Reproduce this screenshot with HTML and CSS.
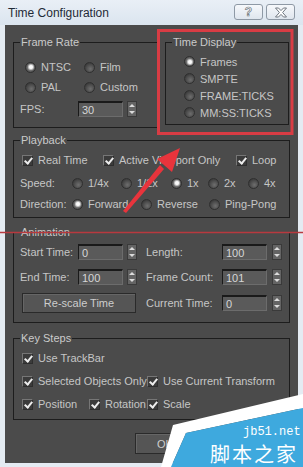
FILE: index.html
```html
<!DOCTYPE html>
<html lang="en">
<head>
    <meta charset="UTF-8">
    <meta name="viewport" content="width=device-width, initial-scale=1.0">
    <title>Time Configuration</title>
    <link rel="stylesheet" href="styles.css">
</head>
<body>
    <div class="window">
        <div class="titlebar">
            <span class="title">Time Configuration</span>
            <div class="caption-btns">
                <span class="cbtn cbtn-help">?</span>
                <span class="cbtn">
                    <svg width="14" height="11" viewBox="0 0 14 11"><path d="M1.5 1h3l2.5 2.6L9.5 1h3L8.6 5.5l3.9 4.5h-3L7 7.4 4.5 10h-3l3.9-4.5z" fill="#fff" stroke="#6f7780" stroke-width="1"/></svg>
                </span>
            </div>
        </div>

        <div class="client">
            <div class="top-row">
                <fieldset class="group frame-rate">
                    <legend>Frame Rate</legend>
                    <div class="radio-grid">
                        <label class="opt"><i class="radio on"></i>NTSC</label>
                        <label class="opt"><i class="radio"></i>Film</label>
                        <label class="opt"><i class="radio"></i>PAL</label>
                        <label class="opt"><i class="radio"></i>Custom</label>
                    </div>
                    <div class="fps-row">
                        <span class="fps-label">FPS:</span>
                        <span class="input">30</span>
                        <span class="spin"><i class="up"></i><i class="down"></i></span>
                    </div>
                </fieldset>

                <fieldset class="group time-display">
                    <legend>Time Display</legend>
                    <label class="opt td-opt"><i class="radio on"></i>Frames</label>
                    <label class="opt td-opt"><i class="radio"></i>SMPTE</label>
                    <label class="opt td-opt"><i class="radio"></i>FRAME:TICKS</label>
                    <label class="opt td-opt"><i class="radio"></i>MM:SS:TICKS</label>
                </fieldset>
            </div>

            <fieldset class="group playback">
                <legend>Playback</legend>
                <div class="pb-row pb-checks">
                    <label class="opt w81"><i class="check"></i>Real Time</label>
                    <label class="opt w133"><i class="check"></i>Active Viewport Only</label>
                    <label class="opt"><i class="check"></i>Loop</label>
                </div>
                <div class="pb-row pb-speed">
                    <span class="row-label">Speed:</span>
                    <label class="opt w49"><i class="radio"></i>1/4x</label>
                    <label class="opt w50"><i class="radio"></i>1/2x</label>
                    <label class="opt w37"><i class="radio on"></i>1x</label>
                    <label class="opt w40"><i class="radio"></i>2x</label>
                    <label class="opt"><i class="radio"></i>4x</label>
                </div>
                <div class="pb-row pb-dir">
                    <span class="row-label">Direction:</span>
                    <label class="opt w69"><i class="radio on"></i>Forward</label>
                    <label class="opt w68"><i class="radio"></i>Reverse</label>
                    <label class="opt"><i class="radio"></i>Ping-Pong</label>
                </div>
            </fieldset>

            <fieldset class="group animation">
                <legend>Animation</legend>
                <div class="anim-row row-start">
                    <span class="lbl-a">Start Time:</span>
                    <span class="input">0</span>
                    <span class="spin"><i class="up"></i><i class="down"></i></span>
                    <span class="lbl-b">Length:</span>
                    <span class="input">100</span>
                    <span class="spin spin-b"><i class="up"></i><i class="down"></i></span>
                </div>
                <div class="anim-row row-end">
                    <span class="lbl-a">End Time:</span>
                    <span class="input">100</span>
                    <span class="spin"><i class="up"></i><i class="down"></i></span>
                    <span class="lbl-b">Frame Count:</span>
                    <span class="input">101</span>
                    <span class="spin spin-b"><i class="up"></i><i class="down"></i></span>
                </div>
                <div class="anim-row row-current">
                    <span class="btn btn-rescale">Re-scale Time</span>
                    <span class="lbl-b lbl-current">Current Time:</span>
                    <span class="input">0</span>
                    <span class="spin spin-b"><i class="up"></i><i class="down"></i></span>
                </div>
            </fieldset>

            <fieldset class="group key-steps">
                <legend>Key Steps</legend>
                <div class="ks-row ks-first">
                    <label class="opt"><i class="check"></i>Use TrackBar</label>
                </div>
                <div class="ks-row">
                    <label class="opt w125"><i class="check"></i>Selected Objects Only</label>
                    <label class="opt"><i class="check"></i>Use Current Transform</label>
                </div>
                <div class="ks-row">
                    <label class="opt w67"><i class="check"></i>Position</label>
                    <label class="opt w58"><i class="check"></i>Rotation</label>
                    <label class="opt"><i class="check"></i>Scale</label>
                </div>
            </fieldset>

            <div class="footer">
                <span class="btn btn-ok">OK</span>
            </div>
        </div>

        <!-- annotations drawn over the dialog -->
        <svg class="marks" width="303" height="467" viewBox="0 0 303 467">
            <rect x="158.5" y="30.5" width="133.5" height="103" fill="none" stroke="#d83c44" stroke-width="3"/>
            <line x1="0" y1="232.5" x2="303" y2="232.5" stroke="#b8393f" stroke-width="1.5"/>
            <polygon points="123,211 126,213 164,169 160,165" fill="#e8343c"/>
            <polygon points="180,148 157,159 172,172" fill="#e8343c"/>
            <polygon points="161,467 173,425 303,394 303,408 186,433 171,467" fill="#ffffff"/>
            <polygon points="171,467 186,433 303,408 303,467" fill="#3ea9de"/>
            <text class="wm-en" x="243" y="435">jb51.net</text>
            <text class="wm-cn" x="210" y="462">脚本之家</text>
        </svg>
    </div>
</body>
</html>
```

FILE: styles.css
```css
* {
    margin: 0;
    padding: 0;
}

body {
    background: #e6edf4;
}

.window {
    width: 303px;
    height: 467px;
    position: relative;
    overflow: hidden;
    background: #e4ebf2;
    font-family: "Liberation Sans", Arial, sans-serif;
    font-size: 11px;
    color: #c6c6c6;
}

/* title bar */
.titlebar {
    height: 25px;
    display: flex;
    padding: 0 8px 0 8px;
    background: linear-gradient(#e9eff6, #dbe5ef);
}

.title {
    padding-top: 6px;
    font-size: 12px;
    line-height: 15px;
    color: #1f2a36;
}

.caption-btns {
    margin-left: auto;
    margin-top: 4px;
    display: flex;
    gap: 3px;
}

.cbtn {
    width: 29px;
    height: 16px;
    box-sizing: border-box;
    display: flex;
    align-items: center;
    justify-content: center;
    border: 1px solid #8e99a5;
    border-radius: 3px;
    background: linear-gradient(#f6f8fb, #dfe6ee);
}

.cbtn-help {
    font-size: 12px;
    font-weight: bold;
    color: #fff;
    -webkit-text-stroke: 0.7px #6f7780;
}

/* dark client area */
.client {
    height: 438px;
    margin: 0 5px;
    padding: 11px 8px 0 8px;
    box-sizing: border-box;
    background: #4b4b4b;
}

.group {
    min-width: 0;
    padding: 0 6px;
    border: 1px solid #1d1d1d;
    box-sizing: border-box;
}

.group legend {
    padding: 0 1px;
    line-height: 13px;
    color: #cacaca;
}

.opt {
    display: flex;
    align-items: center;
    gap: 5px;
    white-space: nowrap;
}

.radio {
    width: 11px;
    height: 11px;
    flex: none;
    position: relative;
    box-sizing: border-box;
    border-radius: 50%;
    border: 1px solid #2f2f2f;
    background: radial-gradient(circle at 60% 65%, #6e6e6e, #3c3c3c 75%);
}

.radio.on {
    background: radial-gradient(circle at 50% 50%, #9a9a9a, #4a4a4a 80%);
}

.radio.on:after {
    content: '';
    position: absolute;
    left: 2.5px;
    top: 2.5px;
    width: 4px;
    height: 4px;
    border-radius: 50%;
    background: #fafafa;
    box-shadow: 0 0 1px 1px rgba(255,255,255,.6);
}

.check {
    width: 11px;
    height: 11px;
    flex: none;
    position: relative;
    box-sizing: border-box;
    border: 1px solid #767676;
    border-right-color: #2e2e2e;
    border-bottom-color: #2e2e2e;
    background: #3b3b3b;
}

.check:after {
    content: '';
    position: absolute;
    left: 3px;
    top: 0;
    width: 3px;
    height: 6px;
    border: solid #ececec;
    border-width: 0 2px 2px 0;
    transform: rotate(40deg);
}

.input {
    height: 16px;
    width: 45px;
    flex: none;
    box-sizing: border-box;
    padding-left: 3px;
    line-height: 14px;
    color: #d6d6d6;
    background: #5a5a5a;
    border: 1px solid #6c6c6c;
    border-top: 2px solid #1a1a1a;
    border-left: 1px solid #1a1a1a;
}

.spin {
    width: 10px;
    height: 16px;
    flex: none;
    margin-left: 4px;
    box-sizing: border-box;
    display: flex;
    flex-direction: column;
    justify-content: space-around;
    align-items: center;
    border: 1px solid #3a3a3a;
    background: #646464;
}

.spin i {
    width: 0;
    height: 0;
    border-left: 3px solid transparent;
    border-right: 3px solid transparent;
}

.spin .up {
    border-bottom: 3px solid #dcdcdc;
}

.spin .down {
    border-top: 3px solid #dcdcdc;
}

.btn {
    display: flex;
    align-items: center;
    justify-content: center;
    box-sizing: border-box;
    color: #cdcdcd;
    background: #555;
    border: 1px solid #2a2a2a;
    box-shadow: inset 1px 1px 0 #666;
}

/* frame rate + time display */
.top-row {
    display: flex;
    align-items: flex-start;
    gap: 7px;
}

.frame-rate {
    width: 145px;
    padding-bottom: 9px;
}

.radio-grid {
    margin: 8px 0 0 5px;
    display: grid;
    grid-template-columns: 59px auto;
    grid-auto-rows: 20px;
}

.fps-row {
    height: 18px;
    margin-top: 3px;
    display: flex;
    align-items: center;
}

.fps-label {
    width: 58px;
}

.time-display {
    width: 124px;
    padding-top: 4px;
    padding-bottom: 3px;
}

.td-opt {
    height: 17px;
    margin-left: 12px;
}

/* playback */
.playback {
    margin-top: 6px;
    padding-bottom: 3px;
}

.pb-row {
    height: 20px;
    display: flex;
    align-items: center;
}

.pb-checks {
    margin: 3px 0 0 2px;
}

.pb-speed {
    margin-top: 3px;
}

.pb-dir {
    margin-top: 1px;
}

.row-label {
    width: 52px;
}

.w37 { width: 37px; }
.w40 { width: 40px; }
.w49 { width: 49px; }
.w50 { width: 50px; }
.w58 { width: 58px; }
.w67 { width: 67px; }
.w68 { width: 68px; }
.w69 { width: 69px; }
.w81 { width: 81px; }
.w125 { width: 125px; }
.w133 { width: 133px; }

/* animation */
.animation {
    margin-top: 8px;
    padding-bottom: 9px;
}

.anim-row {
    height: 16px;
    display: flex;
    align-items: center;
}

.row-start {
    margin-top: 5px;
}

.row-end {
    margin-top: 9px;
}

.row-current {
    height: 20px;
    margin-top: 8px;
}

.lbl-a {
    width: 58px;
}

.lbl-b {
    width: 76px;
    margin-left: 9px;
}

.spin-b {
    margin-left: 5px;
}

.btn-rescale {
    width: 114px;
    height: 20px;
    margin-left: 2px;
}

.lbl-current {
    margin-left: 10px;
}

/* key steps */
.key-steps {
    margin-top: 9px;
    padding-bottom: 6px;
}

.ks-row {
    height: 18px;
    margin: 5px 0 0 2px;
    display: flex;
    align-items: center;
}

.ks-first {
    margin-top: 4px;
}

.footer {
    margin-top: 13px;
    display: flex;
}

.btn-ok {
    width: 60px;
    height: 21px;
    margin-left: 122px;
}

/* overlay marks */
.marks {
    position: absolute;
    top: 0;
    left: 0;
    pointer-events: none;
}

.wm-en {
    font-family: "Liberation Mono", monospace;
    font-size: 12px;
    fill: #fff;
}

.wm-cn {
    font-family: "Noto Sans CJK SC", sans-serif;
    font-size: 20px;
    letter-spacing: 2px;
    fill: #fff;
}
```
